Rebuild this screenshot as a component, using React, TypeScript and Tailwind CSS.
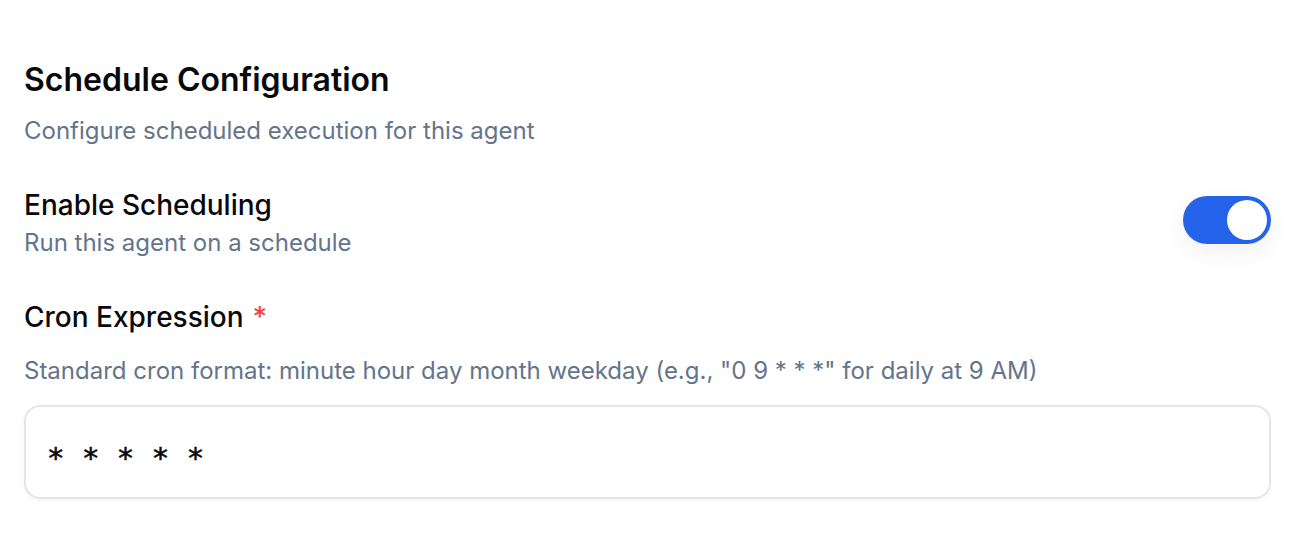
import React from "react";

export default function App() {
  return (
    <div className="w-[1306px] h-[560px] bg-white pl-6 pr-[35px] pt-[60px]" style={{ fontFamily: "Inter, 'Noto Sans', sans-serif" }}>
      <h2 className="text-[32px] leading-[40px] font-semibold text-[#09090b]">Schedule Configuration</h2>
      <p className="mt-[15px] text-[24px] leading-[32px] text-[#64748b]">Configure scheduled execution for this agent</p>
      <div className="mt-[40px] flex items-start justify-between">
        <div className="flex flex-col">
          <span className="text-[28px] leading-[36px] font-medium text-[#09090b]">Enable Scheduling</span>
          <span className="mt-[4px] text-[24px] leading-[32px] text-[#64748b]">Run this agent on a schedule</span>
        </div>
        <button className="mt-[9px] w-[88px] h-[48px] rounded-full bg-[#2563eb] flex items-center justify-end px-[4px] shadow-[0_8px_24px_rgba(0,0,0,0.06)]">
          <span className="w-[40px] h-[40px] rounded-full bg-white block" />
        </button>
      </div>
      <div className="mt-[40px] flex items-center gap-[9px]">
        <span className="text-[28px] leading-[36px] font-medium text-[#09090b]">Cron Expression</span>
        <span className="text-[28px] leading-[36px] font-medium text-[#ef4444]">*</span>
      </div>
      <p className="mt-[20px] text-[24px] leading-[32px] text-[#64748b]">Standard cron format: minute hour day month weekday (e.g., "0 9 * * *" for daily at 9 AM)</p>
      <div className="mt-[18px] h-[94px] rounded-[16px] border-2 border-[#e5e5e5] flex items-center px-[21px] shadow-[0_2px_4px_rgba(0,0,0,0.04)]">
        <span className="text-[29px] leading-[30px] text-[#0a0a0a] translate-y-[6px] [-webkit-text-stroke:0.6px_#0a0a0a]" style={{ fontFamily: "'DejaVu Sans Mono', monospace" }}>* * * * *</span>
      </div>
    </div>
  );
}
